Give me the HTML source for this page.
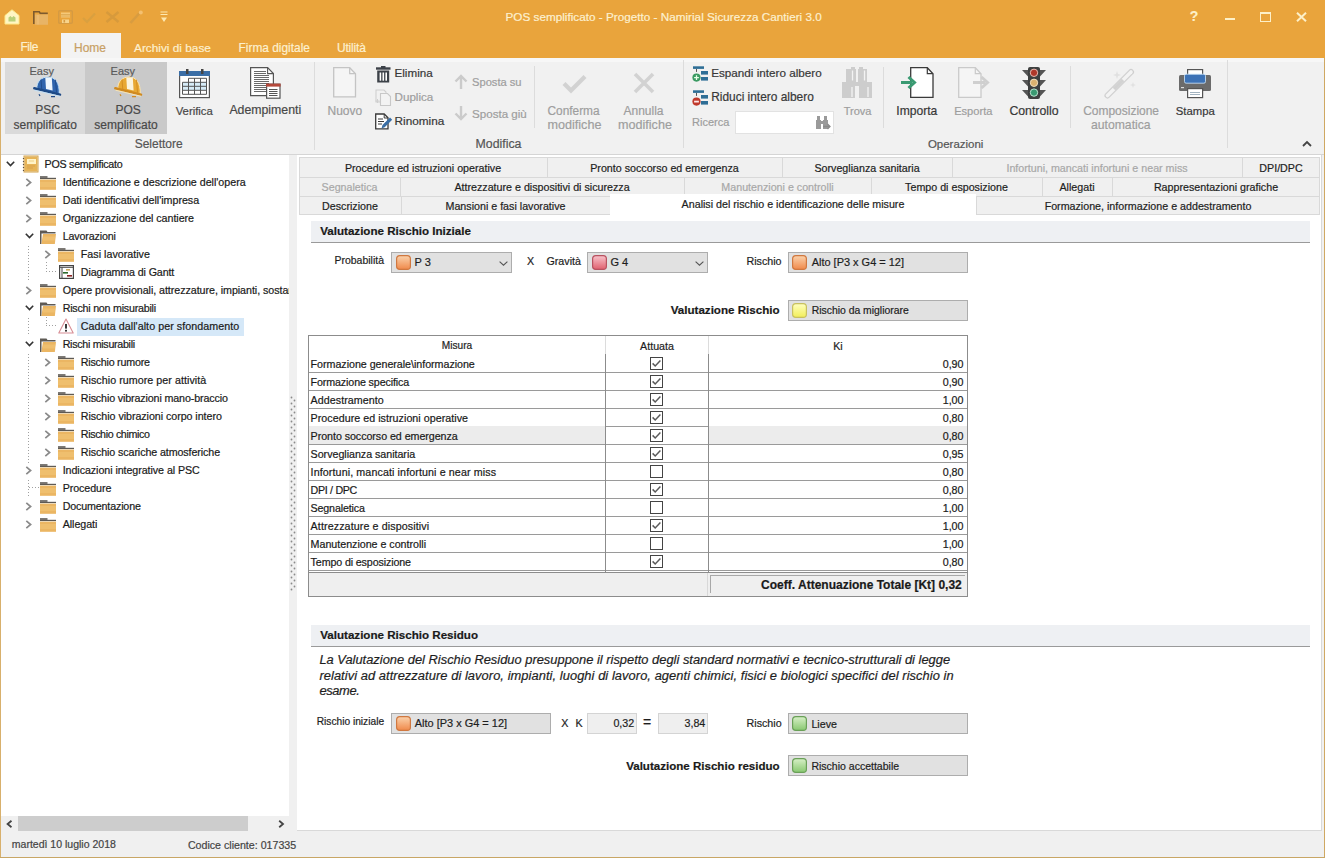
<!DOCTYPE html>
<html><head><meta charset="utf-8">
<style>
html,body{margin:0;padding:0}
body{width:1325px;height:858px;position:relative;overflow:hidden;background:#f0f0f0;font-family:"Liberation Sans",sans-serif;font-size:11px;color:#1e1e1e}
.a{position:absolute;white-space:nowrap;box-sizing:border-box}
div.a{-webkit-text-stroke:0.2px currentColor}
svg.a{overflow:visible}
</style></head><body>
<div class="a" style="left:0px;top:0px;width:1325px;height:58px;background:#e9a43c;"></div>
<div class="a" style="left:505.50px;top:6.93px;font-size:11.74px;line-height:20px;color:#fdf0d0;">POS semplificato - Progetto - Namirial Sicurezza Cantieri 3.0</div>
<div class="a" style="left:20.40px;top:36.84px;font-size:12px;line-height:20px;color:#fdf0d0;letter-spacing:-0.4px;">File</div>
<div class="a" style="left:61px;top:33px;width:60px;height:25px;background:#f3f3f3;"></div>
<div class="a" style="left:74.00px;top:37.84px;font-size:12px;line-height:20px;color:#c8a064;">Home</div>
<div class="a" style="left:134.00px;top:37.90px;font-size:11.84px;line-height:20px;color:#fdf0d0;">Archivi di base</div>
<div class="a" style="left:238.50px;top:37.87px;font-size:11.91px;line-height:20px;color:#fdf0d0;">Firma digitale</div>
<div class="a" style="left:337.00px;top:37.84px;font-size:12px;line-height:20px;color:#fdf0d0;letter-spacing:-0.2px;">Utilità</div>
<div class="a" style="left:1px;top:58px;width:1323px;height:96px;background:#f1f1f1;"></div>
<div class="a" style="left:1px;top:58px;width:1323px;height:4px;background:#f7f7f7;"></div>
<div class="a" style="left:0px;top:58px;width:1px;height:800px;background:#d8b06c;"></div>
<div class="a" style="left:1324px;top:58px;width:1px;height:800px;background:#cfa862;"></div>
<div class="a" style="left:0px;top:857px;width:1325px;height:1px;background:#c8a665;"></div>
<div class="a" style="left:5px;top:62px;width:80px;height:72px;background:#dadada;"></div>
<div class="a" style="left:85px;top:62px;width:82px;height:72px;background:#c9c9c9;"></div>
<div class="a" style="left:29.50px;top:60.89px;font-size:11px;line-height:20px;color:#5a5a5a;">Easy</div>
<div class="a" style="left:110.60px;top:60.89px;font-size:11px;line-height:20px;color:#5a5a5a;">Easy</div>
<div class="a" style="left:35.30px;top:100.24px;font-size:12px;line-height:20px;color:#484848;">PSC</div>
<div class="a" style="left:13.50px;top:115.04px;font-size:12px;line-height:20px;color:#484848;">semplificato</div>
<div class="a" style="left:115.50px;top:100.24px;font-size:12px;line-height:20px;color:#484848;">POS</div>
<div class="a" style="left:94.30px;top:115.04px;font-size:12px;line-height:20px;color:#484848;">semplificato</div>
<div class="a" style="left:175.70px;top:100.57px;font-size:11.34px;line-height:20px;color:#484848;">Verifica</div>
<div class="a" style="left:229.40px;top:100.24px;font-size:12.3px;line-height:20px;color:#484848;">Adempimenti</div>
<div class="a" style="left:134.70px;top:134.34px;font-size:12px;line-height:20px;color:#555;">Selettore</div>
<div class="a" style="left:314px;top:62px;width:1px;height:88px;background:#dcdcdc;"></div>
<div class="a" style="left:327.50px;top:101.04px;font-size:12px;line-height:20px;color:#9e9e9e;">Nuovo</div>
<div class="a" style="left:394.50px;top:63.36px;font-size:11.65px;line-height:20px;color:#383838;">Elimina</div>
<div class="a" style="left:394.50px;top:87.36px;font-size:11.65px;line-height:20px;color:#9e9e9e;">Duplica</div>
<div class="a" style="left:394.50px;top:111.31px;font-size:11.79px;line-height:20px;color:#383838;">Rinomina</div>
<div class="a" style="left:472.00px;top:71.94px;font-size:11.15px;line-height:20px;color:#9e9e9e;">Sposta su</div>
<div class="a" style="left:472.00px;top:103.88px;font-size:11.6px;line-height:20px;color:#9e9e9e;">Sposta giù</div>
<div class="a" style="left:534px;top:66px;width:1px;height:62px;background:#dcdcdc;"></div>
<div class="a" style="left:547.50px;top:100.89px;font-size:11.87px;line-height:20px;color:#9e9e9e;">Conferma</div>
<div class="a" style="left:547.50px;top:114.83px;font-size:12.6px;line-height:20px;color:#9e9e9e;">modifiche</div>
<div class="a" style="left:623.50px;top:100.84px;font-size:12px;line-height:20px;color:#9e9e9e;">Annulla</div>
<div class="a" style="left:618.00px;top:114.83px;font-size:12.6px;line-height:20px;color:#9e9e9e;">modifiche</div>
<div class="a" style="left:475.60px;top:134.04px;font-size:12.3px;line-height:20px;color:#555;">Modifica</div>
<div class="a" style="left:683px;top:60px;width:1px;height:88px;background:#dcdcdc;"></div>
<div class="a" style="left:711.20px;top:63.35px;font-size:11.69px;line-height:20px;color:#383838;">Espandi intero albero</div>
<div class="a" style="left:711.20px;top:87.27px;font-size:11.92px;line-height:20px;color:#383838;">Riduci intero albero</div>
<div class="a" style="left:692.00px;top:111.88px;font-size:11.03px;line-height:20px;color:#9e9e9e;">Ricerca</div>
<div class="a" style="left:735px;top:111px;width:99px;height:23px;background:#ffffff;border:1px solid #e2e2e2;"></div>
<div class="a" style="left:843.70px;top:100.57px;font-size:11.04px;line-height:20px;color:#9e9e9e;">Trova</div>
<div class="a" style="left:883px;top:67px;width:1px;height:61px;background:#dcdcdc;"></div>
<div class="a" style="left:896.30px;top:100.81px;font-size:12.1px;line-height:20px;color:#383838;">Importa</div>
<div class="a" style="left:954.20px;top:100.56px;font-size:11.08px;line-height:20px;color:#9e9e9e;">Esporta</div>
<div class="a" style="left:1009.40px;top:100.74px;font-size:12.3px;line-height:20px;color:#383838;">Controllo</div>
<div class="a" style="left:927.90px;top:134.32px;font-size:11.48px;line-height:20px;color:#555;">Operazioni</div>
<div class="a" style="left:1070px;top:66px;width:1px;height:62px;background:#dcdcdc;"></div>
<div class="a" style="left:1083.20px;top:100.85px;font-size:11.98px;line-height:20px;color:#9e9e9e;">Composizione</div>
<div class="a" style="left:1091.00px;top:114.97px;font-size:12.2px;line-height:20px;color:#9e9e9e;">automatica</div>
<div class="a" style="left:1175.80px;top:100.58px;font-size:11.32px;line-height:20px;color:#383838;">Stampa</div>
<div class="a" style="left:1227px;top:60px;width:1px;height:88px;background:#dcdcdc;"></div>
<div class="a" style="left:1px;top:154px;width:289px;height:662px;background:#ffffff;"></div>
<div class="a" style="left:1px;top:816px;width:289px;height:15px;background:#f0f0f0;"></div>
<div class="a" style="left:18px;top:816px;width:230px;height:15px;background:#cdcdcd;"></div>
<div class="a" style="left:289px;top:154px;width:8px;height:677px;background:#f0f0f0;"></div>
<div class="a" style="left:1px;top:831px;width:1323px;height:26px;background:#f0f0f0;"></div>
<div class="a" style="left:11.80px;top:834.35px;font-size:10.53px;line-height:20px;color:#444;">martedì 10 luglio 2018</div>
<div class="a" style="left:187.90px;top:834.81px;font-size:10.65px;line-height:20px;color:#444;">Codice cliente: 017335</div>
<div class="a" style="left:297px;top:154px;width:1027px;height:677px;background:#f0f0f0;"></div>
<div class="a" style="left:297px;top:154px;width:1024px;height:677px;background:#ffffff;"></div>
<div class="a" style="left:1321px;top:154px;width:1px;height:677px;background:#d9d9d9;"></div>
<div class="a" style="left:297px;top:830px;width:1025px;height:1px;background:#d9d9d9;"></div>
<div class="a" style="left:1px;top:154px;width:288px;height:662px;overflow:hidden">
<div class="a" style="left:43.60px;top:-0.21px;font-size:10.7px;line-height:20px;color:#1a1a1a;letter-spacing:-0.258px;">POS semplificato</div>
<svg class="a" style="left:22px;top:2px" width="15" height="16" viewBox="0 0 15 16"><rect x="1.5" y="0.5" width="13" height="15" fill="#e6b458"/><rect x="1" y="0" width="14" height="16" fill="none" stroke="#d2a24a" stroke-width="1"/><rect x="4" y="3" width="9" height="5" fill="#fff3c8"/><rect x="6" y="4" width="5" height="2" fill="#f6e2a8"/><path d="M4 10h8M4 12h6" stroke="#d9a24a" stroke-width="1"/><path d="M0.5 2v1M0.5 5v1M0.5 8v1M0.5 11v1M0.5 14v1" stroke="#5a5046" stroke-width="1.2"/></svg>
<svg class="a" style="left:5px;top:6.800000000000011px" width="9" height="6" viewBox="0 0 9 6"><path d="M0.8 0.8L4.5 4.6L8.2 0.8" fill="none" stroke="#333" stroke-width="1.6"/></svg>
<div class="a" style="left:61.70px;top:17.79px;font-size:10.7px;line-height:20px;color:#1a1a1a;letter-spacing:-0.007px;">Identificazione e descrizione dell'opera</div>
<svg class="a" style="left:39px;top:22px" width="16" height="14" viewBox="0 0 16 14"><rect x="0" y="0.2" width="7.5" height="1.6" fill="#5e5a55"/><rect x="0" y="1.8" width="16" height="1.3" fill="#5e5a55"/><rect x="0" y="3.6" width="16" height="10.2" fill="#ebb663"/><rect x="0" y="6" width="16" height="5" fill="#efbf6e"/></svg>
<svg class="a" style="left:24.0px;top:23.900000000000006px" width="7" height="9" viewBox="0 0 7 9"><path d="M1.3 0.9L5.6 4.5L1.3 8.1" fill="none" stroke="#8a8a8a" stroke-width="1.7"/></svg>
<div class="a" style="left:61.70px;top:35.79px;font-size:10.7px;line-height:20px;color:#1a1a1a;letter-spacing:-0.014px;">Dati identificativi dell'impresa</div>
<svg class="a" style="left:39px;top:40px" width="16" height="14" viewBox="0 0 16 14"><rect x="0" y="0.2" width="7.5" height="1.6" fill="#5e5a55"/><rect x="0" y="1.8" width="16" height="1.3" fill="#5e5a55"/><rect x="0" y="3.6" width="16" height="10.2" fill="#ebb663"/><rect x="0" y="6" width="16" height="5" fill="#efbf6e"/></svg>
<svg class="a" style="left:24.0px;top:41.900000000000006px" width="7" height="9" viewBox="0 0 7 9"><path d="M1.3 0.9L5.6 4.5L1.3 8.1" fill="none" stroke="#8a8a8a" stroke-width="1.7"/></svg>
<div class="a" style="left:61.70px;top:53.79px;font-size:10.7px;line-height:20px;color:#1a1a1a;letter-spacing:-0.044px;">Organizzazione del cantiere</div>
<svg class="a" style="left:39px;top:58px" width="16" height="14" viewBox="0 0 16 14"><rect x="0" y="0.2" width="7.5" height="1.6" fill="#5e5a55"/><rect x="0" y="1.8" width="16" height="1.3" fill="#5e5a55"/><rect x="0" y="3.6" width="16" height="10.2" fill="#ebb663"/><rect x="0" y="6" width="16" height="5" fill="#efbf6e"/></svg>
<svg class="a" style="left:24.0px;top:59.900000000000006px" width="7" height="9" viewBox="0 0 7 9"><path d="M1.3 0.9L5.6 4.5L1.3 8.1" fill="none" stroke="#8a8a8a" stroke-width="1.7"/></svg>
<div class="a" style="left:61.70px;top:71.79px;font-size:10.7px;line-height:20px;color:#1a1a1a;letter-spacing:-0.142px;">Lavorazioni</div>
<svg class="a" style="left:39px;top:76px" width="16" height="14" viewBox="0 0 16 14"><path d="M0 0.5h6.5l1 1.5h8v1.6h-14v10.4h-1.5z" fill="#5e5a55"/><path d="M3 4h13l-1.2 10h-13.4z" fill="#ebb663"/><path d="M3.4 6.5h11.8l-0.5 4h-12z" fill="#f0c070"/></svg>
<svg class="a" style="left:23.5px;top:78.80000000000001px" width="9" height="6" viewBox="0 0 9 6"><path d="M0.8 0.8L4.5 4.6L8.2 0.8" fill="none" stroke="#333" stroke-width="1.6"/></svg>
<div class="a" style="left:79.80px;top:89.79px;font-size:10.7px;line-height:20px;color:#1a1a1a;letter-spacing:0.016px;">Fasi lavorative</div>
<svg class="a" style="left:57px;top:94px" width="16" height="14" viewBox="0 0 16 14"><rect x="0" y="0.2" width="7.5" height="1.6" fill="#5e5a55"/><rect x="0" y="1.8" width="16" height="1.3" fill="#5e5a55"/><rect x="0" y="3.6" width="16" height="10.2" fill="#ebb663"/><rect x="0" y="6" width="16" height="5" fill="#efbf6e"/></svg>
<svg class="a" style="left:42.5px;top:95.9px" width="7" height="9" viewBox="0 0 7 9"><path d="M1.3 0.9L5.6 4.5L1.3 8.1" fill="none" stroke="#8a8a8a" stroke-width="1.7"/></svg>
<div class="a" style="left:79.80px;top:107.79px;font-size:10.7px;line-height:20px;color:#1a1a1a;letter-spacing:-0.126px;">Diagramma di Gantt</div>
<svg class="a" style="left:58px;top:111px" width="15" height="14" viewBox="0 0 15 14"><rect x="0.6" y="0.6" width="13.8" height="12.8" fill="#fff" stroke="#454545" stroke-width="1.2"/><path d="M0.6 2.3h13.8M3 2.3v11" stroke="#454545" stroke-width="1"/><rect x="7" y="4" width="4" height="1.6" fill="#c9a861"/><rect x="4" y="7" width="5" height="1.6" fill="#2d6b2a"/><rect x="8" y="10" width="5" height="1.6" fill="#8a2424"/></svg>
<div class="a" style="left:61.70px;top:125.79px;font-size:10.7px;line-height:20px;color:#1a1a1a;letter-spacing:-0.05px;">Opere provvisionali, attrezzature, impianti, sostanze</div>
<svg class="a" style="left:39px;top:130px" width="16" height="14" viewBox="0 0 16 14"><rect x="0" y="0.2" width="7.5" height="1.6" fill="#5e5a55"/><rect x="0" y="1.8" width="16" height="1.3" fill="#5e5a55"/><rect x="0" y="3.6" width="16" height="10.2" fill="#ebb663"/><rect x="0" y="6" width="16" height="5" fill="#efbf6e"/></svg>
<svg class="a" style="left:24.0px;top:131.89999999999998px" width="7" height="9" viewBox="0 0 7 9"><path d="M1.3 0.9L5.6 4.5L1.3 8.1" fill="none" stroke="#8a8a8a" stroke-width="1.7"/></svg>
<div class="a" style="left:61.70px;top:143.79px;font-size:10.7px;line-height:20px;color:#1a1a1a;letter-spacing:-0.231px;">Rischi non misurabili</div>
<svg class="a" style="left:39px;top:148px" width="16" height="14" viewBox="0 0 16 14"><path d="M0 0.5h6.5l1 1.5h8v1.6h-14v10.4h-1.5z" fill="#5e5a55"/><path d="M3 4h13l-1.2 10h-13.4z" fill="#ebb663"/><path d="M3.4 6.5h11.8l-0.5 4h-12z" fill="#f0c070"/></svg>
<svg class="a" style="left:23.5px;top:150.8px" width="9" height="6" viewBox="0 0 9 6"><path d="M0.8 0.8L4.5 4.6L8.2 0.8" fill="none" stroke="#333" stroke-width="1.6"/></svg>
<div class="a" style="left:76px;top:163.5px;width:167px;height:18px;background:#d5e8f8;"></div>
<div class="a" style="left:79.80px;top:161.79px;font-size:10.7px;line-height:20px;color:#1a1a1a;letter-spacing:0.064px;">Caduta dall'alto per sfondamento</div>
<svg class="a" style="left:57px;top:164px" width="16" height="16" viewBox="0 0 16 16"><path d="M8 1L15.2 15H0.8z" fill="#fff" stroke="#d88e95" stroke-width="1.1" stroke-linejoin="round"/><rect x="7.1" y="6" width="1.8" height="4.6" fill="#222"/><rect x="7.1" y="11.8" width="1.8" height="1.8" fill="#222"/></svg>
<div class="a" style="left:61.70px;top:179.79px;font-size:10.7px;line-height:20px;color:#1a1a1a;letter-spacing:-0.3px;">Rischi misurabili</div>
<svg class="a" style="left:39px;top:184px" width="16" height="14" viewBox="0 0 16 14"><path d="M0 0.5h6.5l1 1.5h8v1.6h-14v10.4h-1.5z" fill="#5e5a55"/><path d="M3 4h13l-1.2 10h-13.4z" fill="#ebb663"/><path d="M3.4 6.5h11.8l-0.5 4h-12z" fill="#f0c070"/></svg>
<svg class="a" style="left:23.5px;top:186.8px" width="9" height="6" viewBox="0 0 9 6"><path d="M0.8 0.8L4.5 4.6L8.2 0.8" fill="none" stroke="#333" stroke-width="1.6"/></svg>
<div class="a" style="left:79.80px;top:197.79px;font-size:10.7px;line-height:20px;color:#1a1a1a;letter-spacing:-0.211px;">Rischio rumore</div>
<svg class="a" style="left:57px;top:202px" width="16" height="14" viewBox="0 0 16 14"><rect x="0" y="0.2" width="7.5" height="1.6" fill="#5e5a55"/><rect x="0" y="1.8" width="16" height="1.3" fill="#5e5a55"/><rect x="0" y="3.6" width="16" height="10.2" fill="#ebb663"/><rect x="0" y="6" width="16" height="5" fill="#efbf6e"/></svg>
<svg class="a" style="left:42.5px;top:203.89999999999998px" width="7" height="9" viewBox="0 0 7 9"><path d="M1.3 0.9L5.6 4.5L1.3 8.1" fill="none" stroke="#8a8a8a" stroke-width="1.7"/></svg>
<div class="a" style="left:79.80px;top:215.79px;font-size:10.7px;line-height:20px;color:#1a1a1a;letter-spacing:0.047px;">Rischio rumore per attività</div>
<svg class="a" style="left:57px;top:220px" width="16" height="14" viewBox="0 0 16 14"><rect x="0" y="0.2" width="7.5" height="1.6" fill="#5e5a55"/><rect x="0" y="1.8" width="16" height="1.3" fill="#5e5a55"/><rect x="0" y="3.6" width="16" height="10.2" fill="#ebb663"/><rect x="0" y="6" width="16" height="5" fill="#efbf6e"/></svg>
<svg class="a" style="left:42.5px;top:221.89999999999998px" width="7" height="9" viewBox="0 0 7 9"><path d="M1.3 0.9L5.6 4.5L1.3 8.1" fill="none" stroke="#8a8a8a" stroke-width="1.7"/></svg>
<div class="a" style="left:79.80px;top:233.79px;font-size:10.7px;line-height:20px;color:#1a1a1a;letter-spacing:-0.128px;">Rischio vibrazioni mano-braccio</div>
<svg class="a" style="left:57px;top:238px" width="16" height="14" viewBox="0 0 16 14"><rect x="0" y="0.2" width="7.5" height="1.6" fill="#5e5a55"/><rect x="0" y="1.8" width="16" height="1.3" fill="#5e5a55"/><rect x="0" y="3.6" width="16" height="10.2" fill="#ebb663"/><rect x="0" y="6" width="16" height="5" fill="#efbf6e"/></svg>
<svg class="a" style="left:42.5px;top:239.89999999999998px" width="7" height="9" viewBox="0 0 7 9"><path d="M1.3 0.9L5.6 4.5L1.3 8.1" fill="none" stroke="#8a8a8a" stroke-width="1.7"/></svg>
<div class="a" style="left:79.80px;top:251.79px;font-size:10.7px;line-height:20px;color:#1a1a1a;letter-spacing:-0.051px;">Rischio vibrazioni corpo intero</div>
<svg class="a" style="left:57px;top:256px" width="16" height="14" viewBox="0 0 16 14"><rect x="0" y="0.2" width="7.5" height="1.6" fill="#5e5a55"/><rect x="0" y="1.8" width="16" height="1.3" fill="#5e5a55"/><rect x="0" y="3.6" width="16" height="10.2" fill="#ebb663"/><rect x="0" y="6" width="16" height="5" fill="#efbf6e"/></svg>
<svg class="a" style="left:42.5px;top:257.9px" width="7" height="9" viewBox="0 0 7 9"><path d="M1.3 0.9L5.6 4.5L1.3 8.1" fill="none" stroke="#8a8a8a" stroke-width="1.7"/></svg>
<div class="a" style="left:79.80px;top:269.79px;font-size:10.7px;line-height:20px;color:#1a1a1a;letter-spacing:-0.366px;">Rischio chimico</div>
<svg class="a" style="left:57px;top:274px" width="16" height="14" viewBox="0 0 16 14"><rect x="0" y="0.2" width="7.5" height="1.6" fill="#5e5a55"/><rect x="0" y="1.8" width="16" height="1.3" fill="#5e5a55"/><rect x="0" y="3.6" width="16" height="10.2" fill="#ebb663"/><rect x="0" y="6" width="16" height="5" fill="#efbf6e"/></svg>
<svg class="a" style="left:42.5px;top:275.9px" width="7" height="9" viewBox="0 0 7 9"><path d="M1.3 0.9L5.6 4.5L1.3 8.1" fill="none" stroke="#8a8a8a" stroke-width="1.7"/></svg>
<div class="a" style="left:79.80px;top:287.79px;font-size:10.7px;line-height:20px;color:#1a1a1a;letter-spacing:-0.094px;">Rischio scariche atmosferiche</div>
<svg class="a" style="left:57px;top:292px" width="16" height="14" viewBox="0 0 16 14"><rect x="0" y="0.2" width="7.5" height="1.6" fill="#5e5a55"/><rect x="0" y="1.8" width="16" height="1.3" fill="#5e5a55"/><rect x="0" y="3.6" width="16" height="10.2" fill="#ebb663"/><rect x="0" y="6" width="16" height="5" fill="#efbf6e"/></svg>
<svg class="a" style="left:42.5px;top:293.9px" width="7" height="9" viewBox="0 0 7 9"><path d="M1.3 0.9L5.6 4.5L1.3 8.1" fill="none" stroke="#8a8a8a" stroke-width="1.7"/></svg>
<div class="a" style="left:61.70px;top:305.79px;font-size:10.7px;line-height:20px;color:#1a1a1a;letter-spacing:-0.065px;">Indicazioni integrative al PSC</div>
<svg class="a" style="left:39px;top:310px" width="16" height="14" viewBox="0 0 16 14"><rect x="0" y="0.2" width="7.5" height="1.6" fill="#5e5a55"/><rect x="0" y="1.8" width="16" height="1.3" fill="#5e5a55"/><rect x="0" y="3.6" width="16" height="10.2" fill="#ebb663"/><rect x="0" y="6" width="16" height="5" fill="#efbf6e"/></svg>
<svg class="a" style="left:24.0px;top:311.9px" width="7" height="9" viewBox="0 0 7 9"><path d="M1.3 0.9L5.6 4.5L1.3 8.1" fill="none" stroke="#8a8a8a" stroke-width="1.7"/></svg>
<div class="a" style="left:61.70px;top:323.79px;font-size:10.7px;line-height:20px;color:#1a1a1a;letter-spacing:-0.083px;">Procedure</div>
<svg class="a" style="left:39px;top:328px" width="16" height="14" viewBox="0 0 16 14"><rect x="0" y="0.2" width="7.5" height="1.6" fill="#5e5a55"/><rect x="0" y="1.8" width="16" height="1.3" fill="#5e5a55"/><rect x="0" y="3.6" width="16" height="10.2" fill="#ebb663"/><rect x="0" y="6" width="16" height="5" fill="#efbf6e"/></svg>
<div class="a" style="left:61.70px;top:341.79px;font-size:10.7px;line-height:20px;color:#1a1a1a;letter-spacing:-0.154px;">Documentazione</div>
<svg class="a" style="left:39px;top:346px" width="16" height="14" viewBox="0 0 16 14"><rect x="0" y="0.2" width="7.5" height="1.6" fill="#5e5a55"/><rect x="0" y="1.8" width="16" height="1.3" fill="#5e5a55"/><rect x="0" y="3.6" width="16" height="10.2" fill="#ebb663"/><rect x="0" y="6" width="16" height="5" fill="#efbf6e"/></svg>
<svg class="a" style="left:24.0px;top:347.9px" width="7" height="9" viewBox="0 0 7 9"><path d="M1.3 0.9L5.6 4.5L1.3 8.1" fill="none" stroke="#8a8a8a" stroke-width="1.7"/></svg>
<div class="a" style="left:61.70px;top:359.79px;font-size:10.7px;line-height:20px;color:#1a1a1a;letter-spacing:-0.056px;">Allegati</div>
<svg class="a" style="left:39px;top:364px" width="16" height="14" viewBox="0 0 16 14"><rect x="0" y="0.2" width="7.5" height="1.6" fill="#5e5a55"/><rect x="0" y="1.8" width="16" height="1.3" fill="#5e5a55"/><rect x="0" y="3.6" width="16" height="10.2" fill="#ebb663"/><rect x="0" y="6" width="16" height="5" fill="#efbf6e"/></svg>
<svg class="a" style="left:24.0px;top:365.9px" width="7" height="9" viewBox="0 0 7 9"><path d="M1.3 0.9L5.6 4.5L1.3 8.1" fill="none" stroke="#8a8a8a" stroke-width="1.7"/></svg>
<svg class="a" style="left:27px;top:92px" width="1" height="36" viewBox="0 0 1 36"><path d="M0.5 0v36" stroke="#a0a0a0" stroke-width="1" stroke-dasharray="1 2"/></svg>
<svg class="a" style="left:45px;top:117px" width="10" height="1" viewBox="0 0 10 1"><path d="M0 0.5h10" stroke="#a0a0a0" stroke-width="1" stroke-dasharray="1 2"/></svg>
<svg class="a" style="left:45px;top:108px" width="1" height="10" viewBox="0 0 1 10"><path d="M0.5 0v10" stroke="#a0a0a0" stroke-width="1" stroke-dasharray="1 2"/></svg>
<svg class="a" style="left:27px;top:164px" width="1" height="18" viewBox="0 0 1 18"><path d="M0.5 0v18" stroke="#a0a0a0" stroke-width="1" stroke-dasharray="1 2"/></svg>
<svg class="a" style="left:45px;top:163px" width="1" height="9" viewBox="0 0 1 9"><path d="M0.5 0v9" stroke="#a0a0a0" stroke-width="1" stroke-dasharray="1 2"/></svg>
<svg class="a" style="left:45px;top:171px" width="10" height="1" viewBox="0 0 10 1"><path d="M0 0.5h10" stroke="#a0a0a0" stroke-width="1" stroke-dasharray="1 2"/></svg>
<svg class="a" style="left:27px;top:200px" width="1" height="110" viewBox="0 0 1 110"><path d="M0.5 0v110" stroke="#a0a0a0" stroke-width="1" stroke-dasharray="1 2"/></svg>
<svg class="a" style="left:27px;top:326px" width="1" height="18" viewBox="0 0 1 18"><path d="M0.5 0v18" stroke="#a0a0a0" stroke-width="1" stroke-dasharray="1 2"/></svg>
<svg class="a" style="left:28px;top:333px" width="10" height="1" viewBox="0 0 10 1"><path d="M0 0.5h10" stroke="#a0a0a0" stroke-width="1" stroke-dasharray="1 2"/></svg>
</div>
<svg class="a" style="left:6px;top:820px" width="7" height="8" viewBox="0 0 7 8"><path d="M5.5 0.8L1.6 4L5.5 7.2" fill="none" stroke="#444" stroke-width="1.8"/></svg>
<svg class="a" style="left:278px;top:820px" width="7" height="8" viewBox="0 0 7 8"><path d="M1.2 0.8L5 4L1.2 7.2" fill="none" stroke="#444" stroke-width="1.8"/></svg>
<svg class="a" style="left:290px;top:396px" width="6" height="196" viewBox="0 0 6 196"><circle cx="1.5" cy="1.5" r="0.9" fill="#8a8a8a"/><circle cx="4.5" cy="4.5" r="0.9" fill="#8a8a8a"/><circle cx="1.5" cy="7.5" r="0.9" fill="#8a8a8a"/><circle cx="4.5" cy="10.5" r="0.9" fill="#8a8a8a"/><circle cx="1.5" cy="13.5" r="0.9" fill="#8a8a8a"/><circle cx="4.5" cy="16.5" r="0.9" fill="#8a8a8a"/><circle cx="1.5" cy="19.5" r="0.9" fill="#8a8a8a"/><circle cx="4.5" cy="22.5" r="0.9" fill="#8a8a8a"/><circle cx="1.5" cy="25.5" r="0.9" fill="#8a8a8a"/><circle cx="4.5" cy="28.5" r="0.9" fill="#8a8a8a"/><circle cx="1.5" cy="31.5" r="0.9" fill="#8a8a8a"/><circle cx="4.5" cy="34.5" r="0.9" fill="#8a8a8a"/><circle cx="1.5" cy="37.5" r="0.9" fill="#8a8a8a"/><circle cx="4.5" cy="40.5" r="0.9" fill="#8a8a8a"/><circle cx="1.5" cy="43.5" r="0.9" fill="#8a8a8a"/><circle cx="4.5" cy="46.5" r="0.9" fill="#8a8a8a"/><circle cx="1.5" cy="49.5" r="0.9" fill="#8a8a8a"/><circle cx="4.5" cy="52.5" r="0.9" fill="#8a8a8a"/><circle cx="1.5" cy="55.5" r="0.9" fill="#8a8a8a"/><circle cx="4.5" cy="58.5" r="0.9" fill="#8a8a8a"/><circle cx="1.5" cy="61.5" r="0.9" fill="#8a8a8a"/><circle cx="4.5" cy="64.5" r="0.9" fill="#8a8a8a"/><circle cx="1.5" cy="67.5" r="0.9" fill="#8a8a8a"/><circle cx="4.5" cy="70.5" r="0.9" fill="#8a8a8a"/><circle cx="1.5" cy="73.5" r="0.9" fill="#8a8a8a"/><circle cx="4.5" cy="76.5" r="0.9" fill="#8a8a8a"/><circle cx="1.5" cy="79.5" r="0.9" fill="#8a8a8a"/><circle cx="4.5" cy="82.5" r="0.9" fill="#8a8a8a"/><circle cx="1.5" cy="85.5" r="0.9" fill="#8a8a8a"/><circle cx="4.5" cy="88.5" r="0.9" fill="#8a8a8a"/><circle cx="1.5" cy="91.5" r="0.9" fill="#8a8a8a"/><circle cx="4.5" cy="94.5" r="0.9" fill="#8a8a8a"/><circle cx="1.5" cy="97.5" r="0.9" fill="#8a8a8a"/><circle cx="4.5" cy="100.5" r="0.9" fill="#8a8a8a"/><circle cx="1.5" cy="103.5" r="0.9" fill="#8a8a8a"/><circle cx="4.5" cy="106.5" r="0.9" fill="#8a8a8a"/><circle cx="1.5" cy="109.5" r="0.9" fill="#8a8a8a"/><circle cx="4.5" cy="112.5" r="0.9" fill="#8a8a8a"/><circle cx="1.5" cy="115.5" r="0.9" fill="#8a8a8a"/><circle cx="4.5" cy="118.5" r="0.9" fill="#8a8a8a"/><circle cx="1.5" cy="121.5" r="0.9" fill="#8a8a8a"/><circle cx="4.5" cy="124.5" r="0.9" fill="#8a8a8a"/><circle cx="1.5" cy="127.5" r="0.9" fill="#8a8a8a"/><circle cx="4.5" cy="130.5" r="0.9" fill="#8a8a8a"/><circle cx="1.5" cy="133.5" r="0.9" fill="#8a8a8a"/><circle cx="4.5" cy="136.5" r="0.9" fill="#8a8a8a"/><circle cx="1.5" cy="139.5" r="0.9" fill="#8a8a8a"/><circle cx="4.5" cy="142.5" r="0.9" fill="#8a8a8a"/><circle cx="1.5" cy="145.5" r="0.9" fill="#8a8a8a"/><circle cx="4.5" cy="148.5" r="0.9" fill="#8a8a8a"/><circle cx="1.5" cy="151.5" r="0.9" fill="#8a8a8a"/><circle cx="4.5" cy="154.5" r="0.9" fill="#8a8a8a"/><circle cx="1.5" cy="157.5" r="0.9" fill="#8a8a8a"/><circle cx="4.5" cy="160.5" r="0.9" fill="#8a8a8a"/><circle cx="1.5" cy="163.5" r="0.9" fill="#8a8a8a"/><circle cx="4.5" cy="166.5" r="0.9" fill="#8a8a8a"/><circle cx="1.5" cy="169.5" r="0.9" fill="#8a8a8a"/><circle cx="4.5" cy="172.5" r="0.9" fill="#8a8a8a"/><circle cx="1.5" cy="175.5" r="0.9" fill="#8a8a8a"/><circle cx="4.5" cy="178.5" r="0.9" fill="#8a8a8a"/><circle cx="1.5" cy="181.5" r="0.9" fill="#8a8a8a"/><circle cx="4.5" cy="184.5" r="0.9" fill="#8a8a8a"/><circle cx="1.5" cy="187.5" r="0.9" fill="#8a8a8a"/><circle cx="4.5" cy="190.5" r="0.9" fill="#8a8a8a"/><circle cx="1.5" cy="193.5" r="0.9" fill="#8a8a8a"/></svg>
<div class="a" style="left:299px;top:157px;width:1021px;height:58px;background:#f0f0f0;border:1px solid #d9d9d9;border-bottom:none"></div>
<div class="a" style="left:299.00px;top:157.59px;font-size:10.7px;line-height:20px;color:#1e1e1e;width:248px;text-align:center;">Procedure ed istruzioni operative</div>
<div class="a" style="left:547px;top:158px;width:1px;height:19px;background:#d9d9d9;"></div>
<div class="a" style="left:547.00px;top:157.59px;font-size:10.7px;line-height:20px;color:#1e1e1e;width:235px;text-align:center;">Pronto soccorso ed emergenza</div>
<div class="a" style="left:782px;top:158px;width:1px;height:19px;background:#d9d9d9;"></div>
<div class="a" style="left:782.00px;top:157.59px;font-size:10.7px;line-height:20px;color:#1e1e1e;width:170px;text-align:center;">Sorveglianza sanitaria</div>
<div class="a" style="left:952px;top:158px;width:1px;height:19px;background:#d9d9d9;"></div>
<div class="a" style="left:952.00px;top:157.59px;font-size:10.7px;line-height:20px;color:#a8a8a8;width:290px;text-align:center;">Infortuni, mancati infortuni e near miss</div>
<div class="a" style="left:1242px;top:158px;width:1px;height:19px;background:#d9d9d9;"></div>
<div class="a" style="left:1242.00px;top:157.59px;font-size:10.7px;line-height:20px;color:#1e1e1e;width:78px;text-align:center;">DPI/DPC</div>
<div class="a" style="left:299px;top:177px;width:1021px;height:1px;background:#d9d9d9;"></div>
<div class="a" style="left:299.00px;top:176.69px;font-size:10.7px;line-height:20px;color:#a8a8a8;width:101px;text-align:center;">Segnaletica</div>
<div class="a" style="left:400px;top:178px;width:1px;height:18px;background:#d9d9d9;"></div>
<div class="a" style="left:400.00px;top:176.69px;font-size:10.7px;line-height:20px;color:#1e1e1e;width:284px;text-align:center;">Attrezzature e dispositivi di sicurezza</div>
<div class="a" style="left:684px;top:178px;width:1px;height:18px;background:#d9d9d9;"></div>
<div class="a" style="left:684.00px;top:176.69px;font-size:10.7px;line-height:20px;color:#a8a8a8;width:187px;text-align:center;">Manutenzioni e controlli</div>
<div class="a" style="left:871px;top:178px;width:1px;height:18px;background:#d9d9d9;"></div>
<div class="a" style="left:871.00px;top:176.69px;font-size:10.7px;line-height:20px;color:#1e1e1e;width:171px;text-align:center;">Tempo di esposizione</div>
<div class="a" style="left:1042px;top:178px;width:1px;height:18px;background:#d9d9d9;"></div>
<div class="a" style="left:1042.00px;top:176.69px;font-size:10.7px;line-height:20px;color:#1e1e1e;width:70px;text-align:center;">Allegati</div>
<div class="a" style="left:1112px;top:178px;width:1px;height:18px;background:#d9d9d9;"></div>
<div class="a" style="left:1112.00px;top:176.69px;font-size:10.7px;line-height:20px;color:#1e1e1e;width:208px;text-align:center;">Rappresentazioni grafiche</div>
<div class="a" style="left:299px;top:196px;width:1021px;height:1px;background:#d9d9d9;"></div>
<div class="a" style="left:299.00px;top:195.69px;font-size:10.7px;line-height:20px;color:#1e1e1e;width:102px;text-align:center;">Descrizione</div>
<div class="a" style="left:401px;top:197px;width:1px;height:18px;background:#d9d9d9;"></div>
<div class="a" style="left:401.00px;top:195.69px;font-size:10.7px;line-height:20px;color:#1e1e1e;width:209px;text-align:center;">Mansioni e fasi lavorative</div>
<div class="a" style="left:610px;top:197px;width:1px;height:18px;background:#d9d9d9;"></div>
<div class="a" style="left:976px;top:197px;width:1px;height:18px;background:#d9d9d9;"></div>
<div class="a" style="left:976.00px;top:195.69px;font-size:10.7px;line-height:20px;color:#1e1e1e;width:344px;text-align:center;">Formazione, informazione e addestramento</div>
<div class="a" style="left:610px;top:194px;width:366px;height:22px;background:#ffffff;"></div>
<div class="a" style="left:610.00px;top:193.79px;font-size:10.7px;line-height:20px;color:#1e1e1e;width:366px;text-align:center;">Analisi del rischio e identificazione delle misure</div>
<div class="a" style="left:299px;top:214px;width:311px;height:1px;background:#d9d9d9;"></div>
<div class="a" style="left:976px;top:214px;width:344px;height:1px;background:#d9d9d9;"></div>
<div class="a" style="left:311px;top:221px;width:999px;height:21px;background:#eef0f3;"></div>
<div class="a" style="left:311px;top:242px;width:999px;height:1px;background:#9a9a9a;"></div>
<div class="a" style="left:320.20px;top:220.58px;font-size:11.6px;line-height:20px;color:#1a1a1a;font-weight:bold;">Valutazione Rischio Iniziale</div>
<div class="a" style="left:311px;top:625px;width:999px;height:21px;background:#eef0f3;"></div>
<div class="a" style="left:311px;top:646px;width:999px;height:1px;background:#9a9a9a;"></div>
<div class="a" style="left:320.20px;top:624.58px;font-size:11.6px;line-height:20px;color:#1a1a1a;font-weight:bold;">Valutazione Rischio Residuo</div>
<div class="a" style="left:334.50px;top:251.17px;font-size:10.48px;line-height:20px;color:#1e1e1e;">Probabilità</div>
<div class="a" style="left:391px;top:252px;width:121px;height:21px;background:#e1e1e1;border:1px solid #adadad"></div>
<svg class="a" style="left:396px;top:255px" width="15" height="15" viewBox="0 0 15 15"><defs><linearGradient id="g396255" x1="0" y1="0" x2="0" y2="1"><stop offset="0" stop-color="#fbd3ad"/><stop offset="1" stop-color="#f0894a"/></linearGradient></defs><rect x="0.6" y="0.6" width="13.8" height="13.8" rx="3.2" fill="url(#g396255)" stroke="#d07840" stroke-width="1.2"/></svg>
<div class="a" style="left:414.50px;top:252.49px;font-size:11px;line-height:20px;color:#1e1e1e;">P 3</div>
<svg class="a" style="left:498.5px;top:260.5px" width="9" height="5" viewBox="0 0 9 5"><path d="M0.6 0.6L4.5 4.2L8.4 0.6" fill="none" stroke="#555" stroke-width="1.1"/></svg>
<div class="a" style="left:527.10px;top:251.09px;font-size:10.7px;line-height:20px;color:#1e1e1e;">X</div>
<div class="a" style="left:546.50px;top:251.09px;font-size:10.7px;line-height:20px;color:#1e1e1e;">Gravità</div>
<div class="a" style="left:587px;top:252px;width:121px;height:21px;background:#e1e1e1;border:1px solid #adadad"></div>
<svg class="a" style="left:592px;top:255px" width="15" height="15" viewBox="0 0 15 15"><defs><linearGradient id="g592255" x1="0" y1="0" x2="0" y2="1"><stop offset="0" stop-color="#f8c4cc"/><stop offset="1" stop-color="#e0606e"/></linearGradient></defs><rect x="0.6" y="0.6" width="13.8" height="13.8" rx="3.2" fill="url(#g592255)" stroke="#b85260" stroke-width="1.2"/></svg>
<div class="a" style="left:610.50px;top:252.49px;font-size:11px;line-height:20px;color:#1e1e1e;">G 4</div>
<svg class="a" style="left:694.5px;top:260.5px" width="9" height="5" viewBox="0 0 9 5"><path d="M0.6 0.6L4.5 4.2L8.4 0.6" fill="none" stroke="#555" stroke-width="1.1"/></svg>
<div class="a" style="left:746.50px;top:251.19px;font-size:10.7px;line-height:20px;color:#1e1e1e;">Rischio</div>
<div class="a" style="left:788px;top:252px;width:180px;height:21px;background:#e1e1e1;border:1px solid #adadad"></div>
<svg class="a" style="left:792px;top:255px" width="15" height="15" viewBox="0 0 15 15"><defs><linearGradient id="g792255" x1="0" y1="0" x2="0" y2="1"><stop offset="0" stop-color="#fbd3ad"/><stop offset="1" stop-color="#f0894a"/></linearGradient></defs><rect x="0.6" y="0.6" width="13.8" height="13.8" rx="3.2" fill="url(#g792255)" stroke="#d07840" stroke-width="1.2"/></svg>
<div class="a" style="left:811.70px;top:251.60px;font-size:10.96px;line-height:20px;color:#1e1e1e;">Alto [P3 x G4 = 12]</div>
<div class="a" style="left:779.60px;top:300.38px;font-size:11.6px;line-height:20px;color:#1a1a1a;font-weight:bold;left:659.60px;width:120px;text-align:right;">Valutazione Rischio</div>
<div class="a" style="left:788px;top:300px;width:180px;height:21px;background:#e1e1e1;border:1px solid #adadad"></div>
<svg class="a" style="left:792px;top:303px" width="15" height="15" viewBox="0 0 15 15"><defs><linearGradient id="g792303" x1="0" y1="0" x2="0" y2="1"><stop offset="0" stop-color="#ffffc0"/><stop offset="1" stop-color="#f2ee58"/></linearGradient></defs><rect x="0.6" y="0.6" width="13.8" height="13.8" rx="3.2" fill="url(#g792303)" stroke="#c8c060" stroke-width="1.2"/></svg>
<div class="a" style="left:811.70px;top:300.80px;font-size:10.4px;line-height:20px;color:#1e1e1e;">Rischio da migliorare</div>
<div class="a" style="left:308px;top:335px;width:660px;height:262px;background:#ffffff;border:1px solid #8c8c8c"></div>
<div class="a" style="left:605px;top:336px;width:1px;height:18px;background:#dcdcdc;"></div>
<div class="a" style="left:708px;top:336px;width:1px;height:18px;background:#dcdcdc;"></div>
<div class="a" style="left:309.00px;top:336.10px;font-size:10.1px;line-height:20px;color:#1e1e1e;width:296px;text-align:center;">Misura</div>
<div class="a" style="left:606.00px;top:335.89px;font-size:10.7px;line-height:20px;color:#1e1e1e;width:102px;text-align:center;">Attuata</div>
<div class="a" style="left:709.00px;top:335.59px;font-size:10.7px;line-height:20px;color:#1e1e1e;width:258px;text-align:center;">Ki</div>
<div class="a" style="left:309px;top:372px;width:658px;height:1px;background:#9a9a9a;"></div>
<div class="a" style="left:310.60px;top:353.69px;font-size:10.7px;line-height:20px;color:#1a1a1a;letter-spacing:-0.03px;">Formazione generale\informazione</div>
<div class="a" style="left:963.50px;top:353.69px;font-size:10.7px;line-height:20px;color:#1a1a1a;left:903.50px;width:60px;text-align:right;">0,90</div>
<svg class="a" style="left:650px;top:357px" width="13" height="13" viewBox="0 0 13 13"><rect x="0.5" y="0.5" width="12" height="12" fill="#fff" stroke="#444" stroke-width="1"/><path d="M2.6 6.4L5.2 9L10.4 3.6" fill="none" stroke="#5a5a5a" stroke-width="1.5"/></svg>
<div class="a" style="left:309px;top:390px;width:658px;height:1px;background:#9a9a9a;"></div>
<div class="a" style="left:310.60px;top:371.69px;font-size:10.7px;line-height:20px;color:#1a1a1a;letter-spacing:-0.126px;">Formazione specifica</div>
<div class="a" style="left:963.50px;top:371.69px;font-size:10.7px;line-height:20px;color:#1a1a1a;left:903.50px;width:60px;text-align:right;">0,90</div>
<svg class="a" style="left:650px;top:375px" width="13" height="13" viewBox="0 0 13 13"><rect x="0.5" y="0.5" width="12" height="12" fill="#fff" stroke="#444" stroke-width="1"/><path d="M2.6 6.4L5.2 9L10.4 3.6" fill="none" stroke="#5a5a5a" stroke-width="1.5"/></svg>
<div class="a" style="left:309px;top:408px;width:658px;height:1px;background:#9a9a9a;"></div>
<div class="a" style="left:310.60px;top:389.69px;font-size:10.7px;line-height:20px;color:#1a1a1a;letter-spacing:0.061px;">Addestramento</div>
<div class="a" style="left:963.50px;top:389.69px;font-size:10.7px;line-height:20px;color:#1a1a1a;left:903.50px;width:60px;text-align:right;">1,00</div>
<svg class="a" style="left:650px;top:393px" width="13" height="13" viewBox="0 0 13 13"><rect x="0.5" y="0.5" width="12" height="12" fill="#fff" stroke="#444" stroke-width="1"/><path d="M2.6 6.4L5.2 9L10.4 3.6" fill="none" stroke="#5a5a5a" stroke-width="1.5"/></svg>
<div class="a" style="left:309px;top:426px;width:658px;height:1px;background:#9a9a9a;"></div>
<div class="a" style="left:310.60px;top:407.69px;font-size:10.7px;line-height:20px;color:#1a1a1a;letter-spacing:0.037px;">Procedure ed istruzioni operative</div>
<div class="a" style="left:963.50px;top:407.69px;font-size:10.7px;line-height:20px;color:#1a1a1a;left:903.50px;width:60px;text-align:right;">0,80</div>
<svg class="a" style="left:650px;top:411px" width="13" height="13" viewBox="0 0 13 13"><rect x="0.5" y="0.5" width="12" height="12" fill="#fff" stroke="#444" stroke-width="1"/><path d="M2.6 6.4L5.2 9L10.4 3.6" fill="none" stroke="#5a5a5a" stroke-width="1.5"/></svg>
<div class="a" style="left:309px;top:426px;width:296px;height:18px;background:#ececec;"></div>
<div class="a" style="left:709px;top:426px;width:258px;height:18px;background:#ececec;"></div>
<div class="a" style="left:309px;top:444px;width:658px;height:1px;background:#9a9a9a;"></div>
<div class="a" style="left:310.60px;top:425.69px;font-size:10.7px;line-height:20px;color:#1a1a1a;letter-spacing:-0.052px;">Pronto soccorso ed emergenza</div>
<div class="a" style="left:963.50px;top:425.69px;font-size:10.7px;line-height:20px;color:#1a1a1a;left:903.50px;width:60px;text-align:right;">0,80</div>
<svg class="a" style="left:650px;top:429px" width="13" height="13" viewBox="0 0 13 13"><rect x="0.5" y="0.5" width="12" height="12" fill="#fff" stroke="#444" stroke-width="1"/><path d="M2.6 6.4L5.2 9L10.4 3.6" fill="none" stroke="#5a5a5a" stroke-width="1.5"/></svg>
<div class="a" style="left:309px;top:462px;width:658px;height:1px;background:#9a9a9a;"></div>
<div class="a" style="left:310.60px;top:443.69px;font-size:10.7px;line-height:20px;color:#1a1a1a;letter-spacing:-0.027px;">Sorveglianza sanitaria</div>
<div class="a" style="left:963.50px;top:443.69px;font-size:10.7px;line-height:20px;color:#1a1a1a;left:903.50px;width:60px;text-align:right;">0,95</div>
<svg class="a" style="left:650px;top:447px" width="13" height="13" viewBox="0 0 13 13"><rect x="0.5" y="0.5" width="12" height="12" fill="#fff" stroke="#444" stroke-width="1"/><path d="M2.6 6.4L5.2 9L10.4 3.6" fill="none" stroke="#5a5a5a" stroke-width="1.5"/></svg>
<div class="a" style="left:309px;top:480px;width:658px;height:1px;background:#9a9a9a;"></div>
<div class="a" style="left:310.60px;top:461.69px;font-size:10.7px;line-height:20px;color:#1a1a1a;letter-spacing:0.108px;">Infortuni, mancati infortuni e near miss</div>
<div class="a" style="left:963.50px;top:461.69px;font-size:10.7px;line-height:20px;color:#1a1a1a;left:903.50px;width:60px;text-align:right;">0,80</div>
<svg class="a" style="left:650px;top:465px" width="13" height="13" viewBox="0 0 13 13"><rect x="0.5" y="0.5" width="12" height="12" fill="#fff" stroke="#444" stroke-width="1"/></svg>
<div class="a" style="left:309px;top:498px;width:658px;height:1px;background:#9a9a9a;"></div>
<div class="a" style="left:310.60px;top:479.69px;font-size:10.7px;line-height:20px;color:#1a1a1a;letter-spacing:-0.318px;">DPI / DPC</div>
<div class="a" style="left:963.50px;top:479.69px;font-size:10.7px;line-height:20px;color:#1a1a1a;left:903.50px;width:60px;text-align:right;">0,80</div>
<svg class="a" style="left:650px;top:483px" width="13" height="13" viewBox="0 0 13 13"><rect x="0.5" y="0.5" width="12" height="12" fill="#fff" stroke="#444" stroke-width="1"/><path d="M2.6 6.4L5.2 9L10.4 3.6" fill="none" stroke="#5a5a5a" stroke-width="1.5"/></svg>
<div class="a" style="left:309px;top:516px;width:658px;height:1px;background:#9a9a9a;"></div>
<div class="a" style="left:310.60px;top:497.69px;font-size:10.7px;line-height:20px;color:#1a1a1a;letter-spacing:-0.162px;">Segnaletica</div>
<div class="a" style="left:963.50px;top:497.69px;font-size:10.7px;line-height:20px;color:#1a1a1a;left:903.50px;width:60px;text-align:right;">1,00</div>
<svg class="a" style="left:650px;top:501px" width="13" height="13" viewBox="0 0 13 13"><rect x="0.5" y="0.5" width="12" height="12" fill="#fff" stroke="#444" stroke-width="1"/></svg>
<div class="a" style="left:309px;top:534px;width:658px;height:1px;background:#9a9a9a;"></div>
<div class="a" style="left:310.60px;top:515.69px;font-size:10.7px;line-height:20px;color:#1a1a1a;letter-spacing:0.105px;">Attrezzature e dispositivi</div>
<div class="a" style="left:963.50px;top:515.69px;font-size:10.7px;line-height:20px;color:#1a1a1a;left:903.50px;width:60px;text-align:right;">1,00</div>
<svg class="a" style="left:650px;top:519px" width="13" height="13" viewBox="0 0 13 13"><rect x="0.5" y="0.5" width="12" height="12" fill="#fff" stroke="#444" stroke-width="1"/><path d="M2.6 6.4L5.2 9L10.4 3.6" fill="none" stroke="#5a5a5a" stroke-width="1.5"/></svg>
<div class="a" style="left:309px;top:552px;width:658px;height:1px;background:#9a9a9a;"></div>
<div class="a" style="left:310.60px;top:533.69px;font-size:10.7px;line-height:20px;color:#1a1a1a;letter-spacing:-0.017px;">Manutenzione e controlli</div>
<div class="a" style="left:963.50px;top:533.69px;font-size:10.7px;line-height:20px;color:#1a1a1a;left:903.50px;width:60px;text-align:right;">1,00</div>
<svg class="a" style="left:650px;top:537px" width="13" height="13" viewBox="0 0 13 13"><rect x="0.5" y="0.5" width="12" height="12" fill="#fff" stroke="#444" stroke-width="1"/></svg>
<div class="a" style="left:309px;top:570px;width:658px;height:1px;background:#9a9a9a;"></div>
<div class="a" style="left:310.60px;top:551.69px;font-size:10.7px;line-height:20px;color:#1a1a1a;letter-spacing:-0.126px;">Tempo di esposizione</div>
<div class="a" style="left:963.50px;top:551.69px;font-size:10.7px;line-height:20px;color:#1a1a1a;left:903.50px;width:60px;text-align:right;">0,80</div>
<svg class="a" style="left:650px;top:555px" width="13" height="13" viewBox="0 0 13 13"><rect x="0.5" y="0.5" width="12" height="12" fill="#fff" stroke="#444" stroke-width="1"/><path d="M2.6 6.4L5.2 9L10.4 3.6" fill="none" stroke="#5a5a5a" stroke-width="1.5"/></svg>
<div class="a" style="left:605px;top:354px;width:1px;height:219px;background:#8c8c8c;"></div>
<div class="a" style="left:708px;top:354px;width:1px;height:219px;background:#8c8c8c;"></div>
<div class="a" style="left:309px;top:573px;width:658px;height:23px;background:#efefef;"></div>
<div class="a" style="left:309px;top:572px;width:658px;height:1px;background:#8c8c8c;"></div>
<div class="a" style="left:707px;top:573px;width:1px;height:23px;background:#d8d8d8;"></div>
<div class="a" style="left:710px;top:575px;width:255px;height:18px;background:#efefef;border-top:1px solid #a8a8a8;border-left:1px solid #a8a8a8"></div>
<div class="a" style="left:961.80px;top:574.84px;font-size:12px;line-height:20px;color:#1a1a1a;font-weight:bold;left:741.80px;width:220px;text-align:right;">Coeff. Attenuazione Totale [Kt] 0,32</div>
<div class="a" style="left:319.40px;top:649.83px;font-size:12.89px;line-height:20px;color:#1e1e1e;font-style:italic;letter-spacing:0.006px;">La Valutazione del Rischio Residuo presuppone il rispetto degli standard normativi e tecnico-strutturali di legge</div>
<div class="a" style="left:319.40px;top:665.53px;font-size:12.89px;line-height:20px;color:#1e1e1e;font-style:italic;letter-spacing:0.061px;">relativi ad attrezzature di lavoro, impianti, luoghi di lavoro, agenti chimici, fisici e biologici specifici del rischio in</div>
<div class="a" style="left:319.40px;top:681.23px;font-size:12.89px;line-height:20px;color:#1e1e1e;font-style:italic;letter-spacing:-0.354px;">esame.</div>
<div class="a" style="left:316.70px;top:711.97px;font-size:10.2px;line-height:20px;color:#1e1e1e;">Rischio iniziale</div>
<div class="a" style="left:391px;top:713px;width:160px;height:21px;background:#e1e1e1;border:1px solid #adadad"></div>
<svg class="a" style="left:396px;top:716px" width="15" height="15" viewBox="0 0 15 15"><defs><linearGradient id="g396716" x1="0" y1="0" x2="0" y2="1"><stop offset="0" stop-color="#fbd3ad"/><stop offset="1" stop-color="#f0894a"/></linearGradient></defs><rect x="0.6" y="0.6" width="13.8" height="13.8" rx="3.2" fill="url(#g396716)" stroke="#d07840" stroke-width="1.2"/></svg>
<div class="a" style="left:414.80px;top:713.10px;font-size:10.96px;line-height:20px;color:#1e1e1e;">Alto [P3 x G4 = 12]</div>
<div class="a" style="left:561.20px;top:712.59px;font-size:10.7px;line-height:20px;color:#1e1e1e;">X</div>
<div class="a" style="left:575.40px;top:712.59px;font-size:10.7px;line-height:20px;color:#1e1e1e;">K</div>
<div class="a" style="left:587px;top:713px;width:50px;height:21px;background:#efefef;border:1px solid #d4d4d4"></div>
<div class="a" style="left:634.20px;top:713.09px;font-size:10.7px;line-height:20px;color:#1e1e1e;left:594.20px;width:40px;text-align:right;">0,32</div>
<div class="a" style="left:643.00px;top:712.15px;font-size:14px;line-height:20px;color:#1e1e1e;">=</div>
<div class="a" style="left:658px;top:713px;width:50px;height:21px;background:#efefef;border:1px solid #d4d4d4"></div>
<div class="a" style="left:705.30px;top:713.09px;font-size:10.7px;line-height:20px;color:#1e1e1e;left:665.30px;width:40px;text-align:right;">3,84</div>
<div class="a" style="left:746.60px;top:712.59px;font-size:10.7px;line-height:20px;color:#1e1e1e;">Rischio</div>
<div class="a" style="left:788px;top:713px;width:180px;height:21px;background:#e1e1e1;border:1px solid #adadad"></div>
<svg class="a" style="left:792px;top:716px" width="15" height="15" viewBox="0 0 15 15"><defs><linearGradient id="g792716" x1="0" y1="0" x2="0" y2="1"><stop offset="0" stop-color="#d8f0c8"/><stop offset="1" stop-color="#88c870"/></linearGradient></defs><rect x="0.6" y="0.6" width="13.8" height="13.8" rx="3.2" fill="url(#g792716)" stroke="#6aa058" stroke-width="1.2"/></svg>
<div class="a" style="left:811.40px;top:714.19px;font-size:10.7px;line-height:20px;color:#1e1e1e;">Lieve</div>
<div class="a" style="left:779.70px;top:755.69px;font-size:11.57px;line-height:20px;color:#1a1a1a;font-weight:bold;left:609.70px;width:170px;text-align:right;">Valutazione Rischio residuo</div>
<div class="a" style="left:788px;top:755px;width:180px;height:21px;background:#e1e1e1;border:1px solid #adadad"></div>
<svg class="a" style="left:792px;top:758px" width="15" height="15" viewBox="0 0 15 15"><defs><linearGradient id="g792758" x1="0" y1="0" x2="0" y2="1"><stop offset="0" stop-color="#d8f0c8"/><stop offset="1" stop-color="#88c870"/></linearGradient></defs><rect x="0.6" y="0.6" width="13.8" height="13.8" rx="3.2" fill="url(#g792758)" stroke="#6aa058" stroke-width="1.2"/></svg>
<div class="a" style="left:811.40px;top:756.05px;font-size:10.53px;line-height:20px;color:#1e1e1e;">Rischio accettabile</div>
<svg class="a" style="left:4px;top:9px" width="16" height="16" viewBox="0 0 16 16"><path d="M8 0.8L15 6.5V15H1V6.5z" fill="#fff6c4" stroke="#fde98a" stroke-width="1"/><path d="M4.5 8.5l2 -1.5 1.5 1.5 1.5 -1.5 2 1.5v4h-7z" fill="#b8d07a"/></svg>
<svg class="a" style="left:33px;top:11px" width="15" height="14" viewBox="0 0 15 14"><path d="M0.8 13V0.8h5.5l1 1.6h7.5" fill="none" stroke="#7d5a2e" stroke-width="1.6"/><rect x="2" y="3.4" width="13" height="10.4" fill="#e8b466"/><path d="M5 4v9.5" stroke="#f0c07a" stroke-width="1"/></svg>
<svg class="a" style="left:58px;top:10px" width="15" height="14" viewBox="0 0 15 14"><rect x="0.7" y="0.7" width="13.6" height="12.6" rx="1" fill="none" stroke="#d59a42" stroke-width="1.4"/><rect x="3" y="2.5" width="9" height="5" fill="#f5c878"/><path d="M3 4.5h9M3 6h9" stroke="#dba650" stroke-width="0.8"/><rect x="4" y="9.5" width="7" height="3.5" fill="#f8d48c"/><rect x="5.5" y="10" width="1.6" height="2.5" fill="#d59a42"/></svg>
<svg class="a" style="left:82px;top:12px" width="14" height="11" viewBox="0 0 14 11"><path d="M1 6l4 4 8 -8.5" fill="none" stroke="#d9a040" stroke-width="2.2"/></svg>
<svg class="a" style="left:105px;top:11px" width="15" height="12" viewBox="0 0 15 12"><path d="M1.5 1l12 10M13.5 1l-12 10" fill="none" stroke="#d79a3c" stroke-width="2.4"/></svg>
<svg class="a" style="left:129px;top:10px" width="15" height="14" viewBox="0 0 15 14"><path d="M1.5 13L10.5 3" stroke="#d89c40" stroke-width="2.6"/><circle cx="11.8" cy="2.6" r="2" fill="#f4c070"/></svg>
<svg class="a" style="left:160px;top:11px" width="8" height="12" viewBox="0 0 8 12"><path d="M0.5 1h7M0.5 3.5h7" stroke="#fde8b0" stroke-width="1"/><path d="M1 6.5h6l-3 4.5z" fill="#fde8b0"/></svg>
<div class="a" style="left:1189.80px;top:6.35px;font-size:14px;line-height:20px;color:#fdf0c8;font-weight:bold;">?</div>
<div class="a" style="left:1224.5px;top:17.5px;width:10px;height:2px;background:#fdf0c8;"></div>
<div class="a" style="left:1259.5px;top:11.5px;width:11px;height:10px;background:none;border:1px solid #fdf0c8;border-top-width:2px"></div>
<svg class="a" style="left:1296px;top:12px" width="11" height="10" viewBox="0 0 11 10"><path d="M1 0.8L10 9.2M10 0.8L1 9.2" stroke="#fdf0c8" stroke-width="2"/></svg>
<svg class="a" style="left:33px;top:75px" width="28" height="23" viewBox="0 0 28 23"><path d="M4 14.2C3.2 6.5 8.5 2 15 2C21.5 2 27 7 26.2 19.6z" fill="#2f64ad" stroke="#bfe0f8" stroke-width="1"/><path d="M12.3 2.4L18.8 2.6L19.6 15.6L13 14.1z" fill="#eef6fc"/><path d="M8 4.5L8.8 14.8M22.5 4.8L23.5 17.6" stroke="#1e4a86" stroke-width="0.9"/><path d="M1.3 13.3L27 19.6" stroke="#1e4a86" stroke-width="2.5" stroke-linecap="round"/><path d="M1.5 15.2L27 21.3" stroke="#bfe0f8" stroke-width="0.9"/><path d="M6 19.2l1 1.8M18 21.6h4" stroke="#1e4a86" stroke-width="1.2"/></svg>
<svg class="a" style="left:114px;top:75px" width="28" height="23" viewBox="0 0 28 23"><path d="M4 14.2C3.2 6.5 8.5 2 15 2C21.5 2 27 7 26.2 19.6z" fill="#e8a832" stroke="#fde6b0" stroke-width="1"/><path d="M12.3 2.4L18.8 2.6L19.6 15.6L13 14.1z" fill="#fbf3dc"/><path d="M8 4.5L8.8 14.8M22.5 4.8L23.5 17.6" stroke="#d08a20" stroke-width="0.9"/><path d="M1.3 13.3L27 19.6" stroke="#d08a20" stroke-width="2.5" stroke-linecap="round"/><path d="M1.5 15.2L27 21.3" stroke="#fde6b0" stroke-width="0.9"/><path d="M6 19.2l1 1.8M18 21.6h4" stroke="#d08a20" stroke-width="1.2"/></svg>
<svg class="a" style="left:179px;top:69px" width="31" height="29" viewBox="0 0 31 29"><rect x="0.6" y="2.6" width="29.8" height="26" fill="#fff" stroke="#555" stroke-width="1.2"/><rect x="0" y="2" width="31" height="5" fill="#3b6ea6"/><rect x="7" y="0" width="2.5" height="5" fill="#444"/><rect x="22" y="0" width="2.5" height="5" fill="#444"/><rect x="3.5" y="13" width="24" height="8" fill="#d6ebf7"/><path d="M9.5 9.3h18M3.5 13.3h24M3.5 17.3h24M3.5 21.3h24M3.5 25.3h24M3.5 13.3v12M9.5 9.3v16M15.5 9.3v16M21.5 9.3v16M27.5 9.3v16" stroke="#555" stroke-width="1" fill="none"/></svg>
<svg class="a" style="left:250px;top:67px" width="31" height="32" viewBox="0 0 31 32"><path d="M0.6 0.6h17l5.8 6v22h-22.8z" fill="#fff" stroke="#555" stroke-width="1.2"/><path d="M17.6 0.6v6h5.8" fill="none" stroke="#555" stroke-width="1.1"/><path d="M4 4.5h12" stroke="#6a6a6a" stroke-width="1"/><path d="M4 6.5h12" stroke="#6a6a6a" stroke-width="1"/><path d="M4 8.5h15" stroke="#6a6a6a" stroke-width="1"/><path d="M4 10.5h15" stroke="#6a6a6a" stroke-width="1"/><path d="M4 12.5h15" stroke="#6a6a6a" stroke-width="1"/><path d="M4 14.5h15" stroke="#6a6a6a" stroke-width="1"/><path d="M4 16.5h15" stroke="#6a6a6a" stroke-width="1"/><path d="M4 18.5h15" stroke="#6a6a6a" stroke-width="1"/><path d="M4 20.5h15" stroke="#6a6a6a" stroke-width="1"/><path d="M4 22.5h15" stroke="#6a6a6a" stroke-width="1"/><path d="M4 24.5h15" stroke="#6a6a6a" stroke-width="1"/><rect x="16.6" y="17.2" width="13.4" height="14" fill="#fff" stroke="#555" stroke-width="1.2"/><rect x="16" y="16.6" width="14.6" height="3" fill="#b4483a"/><path d="M19 22.5h8.5M19 24.5h8.5M19 26.5h8.5M19 28.5h8.5" stroke="#555" stroke-width="1"/></svg>
<svg class="a" style="left:333px;top:67px" width="24" height="31" viewBox="0 0 24 31"><path d="M0.7 0.7h16l5.8 6v23.1h-21.8z" fill="#f5f5f5" stroke="#c4c4c4" stroke-width="1.3"/><path d="M16.7 0.7v6h5.8" fill="none" stroke="#c4c4c4" stroke-width="1.2"/></svg>
<svg class="a" style="left:376px;top:66px" width="15" height="17" viewBox="0 0 15 17"><rect x="0" y="1.3" width="14.5" height="2.4" fill="#3c4148"/><rect x="5" y="0" width="4.5" height="2" fill="#3c4148"/><rect x="1.2" y="4.5" width="12" height="12" fill="#3c4148"/><rect x="3.6" y="6.5" width="1.6" height="8.2" fill="#fff"/><rect x="6.5" y="6.5" width="1.6" height="8.2" fill="#fff"/><rect x="9.4" y="6.5" width="1.6" height="8.2" fill="#fff"/></svg>
<svg class="a" style="left:375px;top:89px" width="17" height="17" viewBox="0 0 17 17"><path d="M1 1h8l2 2v10h-10z" fill="none" stroke="#cfcfcf" stroke-width="1.1"/><path d="M5.5 4.5h7l3 3v9h-10z" fill="#f3f3f3" stroke="#c8c8c8" stroke-width="1.1"/><path d="M0.5 12h4M2.5 10v4" stroke="#cfcfcf" stroke-width="1"/></svg>
<svg class="a" style="left:375px;top:113px" width="17" height="17" viewBox="0 0 17 17"><path d="M0.7 1h8.5l3.8 3.8v11h-12.3z" fill="#fff" stroke="#3a3a3a" stroke-width="1.3"/><path d="M9.2 1v4h3.8" fill="none" stroke="#3a3a3a" stroke-width="1"/><path d="M3 6h5M3 8.5h6M3 11h4" stroke="#3a3a3a" stroke-width="1"/><path d="M6.5 15.5l1-3.5 7.5-7.5 2.2 2.2-7.5 7.5z" fill="#3a6ea5"/></svg>
<svg class="a" style="left:454px;top:74px" width="14" height="16" viewBox="0 0 14 16"><path d="M7 15V2M1.5 7.5L7 2l5.5 5.5" fill="none" stroke="#cbcbcb" stroke-width="2.4"/></svg>
<svg class="a" style="left:454px;top:105px" width="14" height="16" viewBox="0 0 14 16"><path d="M7 1v13M1.5 8.5L7 14l5.5-5.5" fill="none" stroke="#cbcbcb" stroke-width="2.4"/></svg>
<svg class="a" style="left:562px;top:74px" width="25" height="19" viewBox="0 0 25 19"><path d="M2 9.5l7 7L23 2.5" fill="none" stroke="#d2d2d2" stroke-width="4.2"/></svg>
<svg class="a" style="left:633px;top:72px" width="22" height="22" viewBox="0 0 22 22"><path d="M2 2l18 18M20 2L2 20" fill="none" stroke="#d2d2d2" stroke-width="3.6"/></svg>
<svg class="a" style="left:692px;top:66px" width="17" height="16" viewBox="0 0 17 16"><rect x="1" y="0.3" width="11" height="2.6" fill="#2e6e96"/><path d="M4.5 2.9v3" stroke="#555" stroke-width="1"/><rect x="9" y="5" width="7" height="3.6" fill="#2e6e96"/><rect x="9" y="11" width="7" height="3.6" fill="#2e6e96"/><circle cx="4.5" cy="11.6" r="4.1" fill="#3a9a62"/><path d="M4.5 9.2v4.8M2.1 11.6h4.8" stroke="#e8ffe8" stroke-width="1.3"/></svg>
<svg class="a" style="left:692px;top:90px" width="17" height="16" viewBox="0 0 17 16"><rect x="1" y="0.3" width="11" height="2.6" fill="#2e6e96"/><path d="M4.5 2.9v3" stroke="#555" stroke-width="1"/><rect x="9" y="5" width="7" height="3.6" fill="#2e6e96"/><rect x="9" y="11" width="7" height="3.6" fill="#2e6e96"/><circle cx="4.5" cy="11.6" r="4.1" fill="#c0392b"/><path d="M2.1 11.6h4.8" stroke="#ffe8e8" stroke-width="1.8"/></svg>
<svg class="a" style="left:815px;top:114px" width="16" height="16" viewBox="0 0 16 16"><path d="M1 6h5v9h-5zM8 6h5v9h-5zM2 2h3v4h-3zM9 2h3v4h-3zM5 7h4v3h-4z" fill="#9a9a9a"/><path d="M8 12.5h7M12.5 10l2.5 2.5-2.5 2.5" fill="none" stroke="#8a8a8a" stroke-width="1.3"/></svg>
<svg class="a" style="left:842px;top:67px" width="30" height="31" viewBox="0 0 30 31"><g fill="#cdcdcd"><rect x="9" y="0" width="4" height="2"/><rect x="17" y="0" width="4" height="2"/><rect x="4" y="2" width="10" height="13"/><rect x="16" y="2" width="9" height="13"/><rect x="0" y="15" width="30" height="4"/><rect x="0" y="19" width="13" height="12"/><rect x="17" y="19" width="13" height="12"/></g><path d="M10.5 3.5v10M22.5 3.5v10M10 20v10M26 20v10" stroke="#f3f3f3" stroke-width="1.3"/></svg>
<svg class="a" style="left:900px;top:67px" width="34" height="31" viewBox="0 0 34 31"><path d="M10.7 0.7h16.6l5.7 6v23.6h-22.3z" fill="#fff" stroke="#3a3a3a" stroke-width="1.3"/><path d="M27.3 0.7v6h5.7" fill="none" stroke="#3a3a3a" stroke-width="1.2"/><path d="M1 15.5h11" stroke="#3a9a72" stroke-width="3"/><path d="M8.5 10l6 5.5-6 5.5" fill="none" stroke="#3a9a72" stroke-width="3"/></svg>
<svg class="a" style="left:958px;top:67px" width="31" height="31" viewBox="0 0 31 31"><path d="M0.7 0.7h16.6l5.7 6v23.6h-22.3z" fill="#f5f5f5" stroke="#cacaca" stroke-width="1.3"/><path d="M17.3 0.7v6h5.7" fill="none" stroke="#cacaca" stroke-width="1.2"/><path d="M15 15.5h12" stroke="#cfcfcf" stroke-width="3"/><path d="M23.5 10l6 5.5-6 5.5" fill="none" stroke="#cfcfcf" stroke-width="3"/></svg>
<svg class="a" style="left:1022px;top:67px" width="24" height="32" viewBox="0 0 24 32"><path d="M0 3h6v6.5zM0 13h6v6.5zM0 23h6v6.5zM24 3h-6v6.5zM24 13h-6v6.5zM24 23h-6v6.5z" fill="#555"/><rect x="6" y="0" width="12" height="32" rx="2" fill="#3e4040"/><circle cx="12" cy="5.8" r="3.7" fill="#b0382a" stroke="#f0c8c0" stroke-width="0.9"/><circle cx="12" cy="15.8" r="3.7" fill="#dcb270" stroke="#f8e8c8" stroke-width="0.9"/><circle cx="12" cy="25.6" r="3.7" fill="#3a9a72" stroke="#c8f0dc" stroke-width="0.9"/></svg>
<svg class="a" style="left:1104px;top:66px" width="34" height="33" viewBox="0 0 34 33"><path d="M3.5 29.5L27 6" stroke="#cfcfcf" stroke-width="6" stroke-linecap="round"/><path d="M3.5 29.5L27 6" stroke="#f3f3f3" stroke-width="3.6" stroke-linecap="round"/><path d="M10 23L19 14" stroke="#d2d2d2" stroke-width="3.8"/><path d="M13 5l1 3 3 1-3 1-1 3-1-3-3-1 3-1zM29 16l0.8 2.2 2.2 0.8-2.2 0.8-0.8 2.2-0.8-2.2-2.2-0.8 2.2-0.8z" fill="#e0e0e0"/></svg>
<svg class="a" style="left:1179px;top:69px" width="32" height="29" viewBox="0 0 32 29"><rect x="8.6" y="0.6" width="15" height="8" fill="#fff" stroke="#555" stroke-width="1.2"/><rect x="0" y="6" width="32" height="16" rx="1.5" fill="#6b6b6b"/><rect x="5.5" y="5.2" width="21" height="9" rx="1.6" fill="#3c72b6" stroke="#cfe8fa" stroke-width="0.8"/><rect x="2" y="18" width="3" height="1.2" fill="#ddd"/><rect x="8.6" y="19.6" width="15" height="9" fill="#fff" stroke="#555" stroke-width="1.2"/><path d="M11 23.5h10M11 25.5h10" stroke="#8aa0b0" stroke-width="0.8"/></svg>
<svg class="a" style="left:1302px;top:140px" width="10" height="7" viewBox="0 0 10 7"><path d="M1 6L5 2L9 6" fill="none" stroke="#444" stroke-width="1.8"/></svg>
<div class="a" style="left:1px;top:154px;width:1323px;height:1px;background:#d5d5d5;"></div>

</body></html>
